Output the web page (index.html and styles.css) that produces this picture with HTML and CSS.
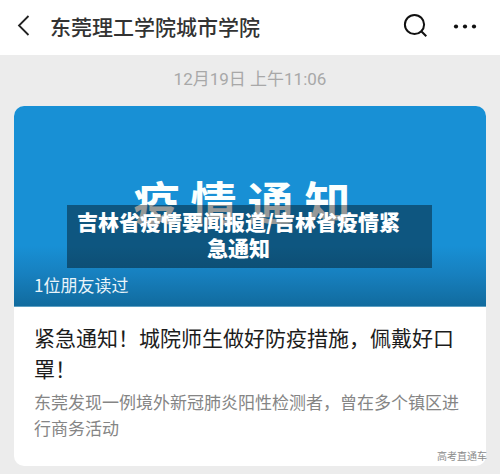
FILE: index.html
```html
<!DOCTYPE html>
<html lang="zh-CN">
<head>
<meta charset="utf-8">
<meta name="viewport" content="width=device-width, initial-scale=1">
<title>东莞理工学院城市学院</title>
<link rel="stylesheet" href="styles.css">
</head>
<body>
<header class="topbar">
  <button class="icon-button" type="button" aria-label="返回">
    <svg width="14" height="24" viewBox="0 0 14 24"><path d="M11.5 2 2 11.500l9.500 9.500" fill="none" stroke="#222" stroke-width="1.800"/></svg>
  </button>
  <h1 class="title">东莞理工学院城市学院</h1>
  <button class="icon-button" type="button" aria-label="搜索">
    <svg width="26" height="26" viewBox="0 0 26 26"><g fill="none" stroke="#111" stroke-width="2"><circle cx="12.500" cy="11.500" r="9.600"/><path d="m19 18 5.300 5.300"/></g></svg>
  </button>
  <button class="icon-button" type="button" aria-label="更多">
    <svg width="24" height="26" viewBox="0 0 24 26"><g fill="#111"><circle cx="3" cy="13.500" r="2.100"/><circle cx="12" cy="13.500" r="2.100"/><circle cx="21" cy="13.500" r="2.100"/></g></svg>
  </button>
</header>
<main class="feed">
  <time class="time">12月19日 上午11:06</time>
  <article class="card">
    <div class="cover">
      <div class="cover-title"><span>疫</span><span>情</span><span>通</span><span>知</span></div>
      <p class="readers">1位朋友读过</p>
      <p class="caption">吉林省疫情要闻报道/吉林省疫情紧急通知</p>
    </div>
    <div class="body">
      <h2 class="headline">紧急通知！城院师生做好防疫措施，佩戴好口罩！</h2>
      <p class="summary">东莞发现一例境外新冠肺炎阳性检测者，曾在多个镇区进行商务活动</p>
    </div>
    <span class="watermark">高考直通车</span>
  </article>
</main>
</body>
</html>
```
FILE: styles.css
```css
* {
  box-sizing: border-box;
}

body {
  margin: 0;
  background: #ececec;
  font-family: "Noto Sans CJK SC", sans-serif;
}

h1, h2, p {
  margin: 0;
}

.topbar {
  display: flex;
  align-items: center;
  height: 55px;
  padding: 0 23px 4px 17px;
  background: #fff;
}

.icon-button {
  display: flex;
  padding: 0;
  border: 0;
  background: none;
}

.title {
  flex: 1;
  margin-left: 19px;
  font-size: 21px;
  font-weight: 500;
  line-height: 30px;
  color: #333;
}

.icon-button + .icon-button {
  margin-left: 25px;
}

.feed {
  padding: 12px 14px 9px;
}

.time {
  display: block;
  margin-bottom: 15px;
  text-align: center;
  font-family: Roboto, "Noto Sans CJK SC", sans-serif;
  font-size: 17px;
  line-height: 24px;
  color: #a8a8a8;
}

.card {
  position: relative;
  border-radius: 10px;
  background: #fff;
}

.cover {
  position: relative;
  display: flex;
  flex-direction: column;
  justify-content: space-between;
  height: 201px;
  padding: 64px 20px 8px;
  border-radius: 10px 10px 0 0;
  border-bottom: 1px solid #5c9fc2;
  background: linear-gradient(#1890d5 70%, #1780bf 84%, #116b9e);
}

.cover-title {
  display: flex;
  justify-content: center;
  gap: 11px;
  margin-right: 16px;
  font-size: 46px;
  font-weight: 700;
  line-height: 60px;
  color: #fbfffe;
}

.readers {
  font-size: 17px;
  line-height: 26px;
  color: #e9f4fa;
}

.caption {
  position: absolute;
  top: 99px;
  left: 53px;
  right: 54px;
  padding: 3px 28px 8px 6px;
  background: rgba(0, 0, 0, 0.4);
  text-align: center;
  font-size: 21px;
  font-weight: 900;
  line-height: 26px;
  color: #fff;
}

.body {
  padding: 15px 16px 25px 20px;
}

.headline {
  font-size: 21px;
  font-weight: 400;
  line-height: 31px;
  color: #1c1c1c;
}

.summary {
  margin-top: 5px;
  font-size: 17px;
  line-height: 26px;
  color: #858585;
}

.watermark {
  position: absolute;
  right: -1px;
  bottom: 2px;
  font-size: 10px;
  line-height: 16px;
  color: #8c8c8c;
}
```
